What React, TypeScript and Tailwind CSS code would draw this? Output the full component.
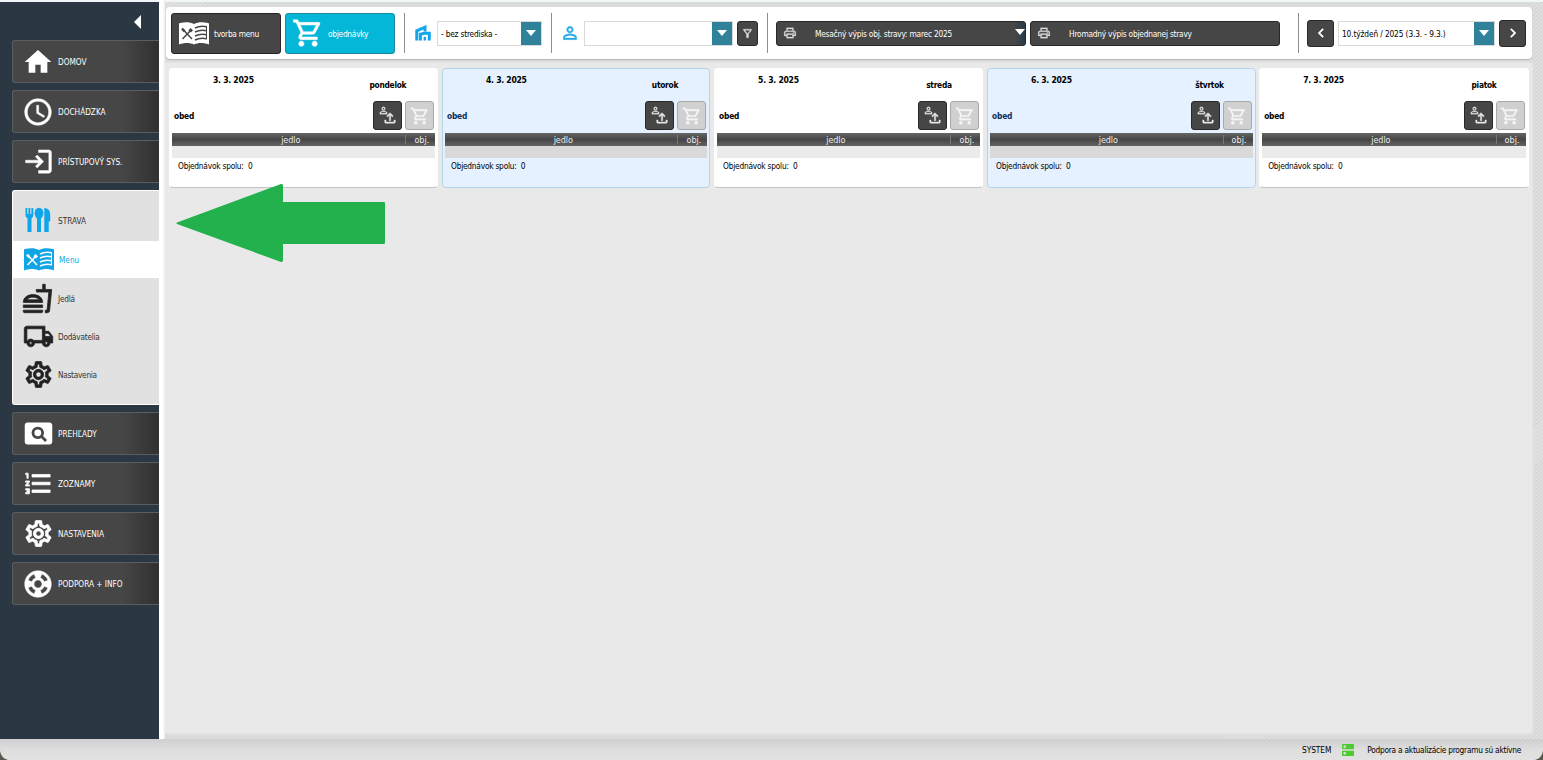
import React from 'react';
import {
  MdAccessTime,
  MdChevronLeft,
  MdChevronRight,
  MdDns,
  MdFormatListNumbered,
  MdHome,
  MdLogin,
  MdOutlineFastfood,
  MdOutlineFileUpload,
  MdOutlineFilterAlt,
  MdOutlineLocalShipping,
  MdOutlinePrint,
  MdOutlineSettings,
  MdOutlineShoppingCart,
  MdPageview,
  MdPersonOutline,
  MdSupport,
} from 'react-icons/md';

const hatch = 'bg-[repeating-linear-gradient(135deg,#d6d6d6_0px,#d6d6d6_1.4px,#e0e0e0_1.4px,#e0e0e0_2.83px)]';

// Heavier outline for the thin Material glyphs; their empty bounding path stays unstroked
const bold = 'shrink-0 stroke-current [stroke-width:0.6] [&>[fill=none]]:stroke-none';
const semi = 'shrink-0 stroke-current [stroke-width:0.35] [&>[fill=none]]:stroke-none';

const MenuBookIcon = ({ lines }: { lines: string }) => (
  <svg width="30" height="23" viewBox="0 0 30 23" className="shrink-0">
    <path d="M0 2Q0 1 1 1C6 -0.3 11 -0.2 15 2C19 -0.2 24 -0.3 29 1Q30 1 30 2V22.5C25 20.5 19 20.5 15 22.5C11 20.5 5 20.5 0 22.5Z" fill="currentColor" />
    <g stroke={lines} fill="none">
      <path d="M3.5 7L13 17M12.5 7.5L3.5 17" strokeWidth="1.5" />
      <path d="M10.6 9.4L12.8 7.2" strokeWidth="3.4" />
      <path d="M3 6.6L5.6 9.4" strokeWidth="2.4" />
      <path d="M16 6C20 4 23.5 4 27.5 4.7M16 10C20 8 23.5 8 27.5 8.7M16 14C20 12 23.5 12 27.5 12.7M16 18C20 16 23.5 16 27.5 16.7" strokeWidth="1.5" />
      <path d="M27.5 4V17.4" strokeWidth="1" />
    </g>
  </svg>
);

const CutleryIcon = () => (
  <svg width="26" height="26" viewBox="0 0 26 26" fill="currentColor" className="shrink-0">
    <path d="M0.5 1H2.3V7H3.4V1H5.3V7H6.4V1H8.3V8Q8.3 10.5 6.5 11.3V25H2.5V11.3Q0.5 10.5 0.5 8Z" />
    <ellipse cx="14" cy="6.3" rx="4.4" ry="5.6" />
    <path d="M12 10H16V25H12ZM19.3 1Q25.2 1.2 25.2 8V14.5H23.7V25H19.3Z" />
  </svg>
);

const CentreIcon = () => (
  <svg width="16" height="17" viewBox="0 0 16 17" fill="none" stroke="#12a5ea" strokeWidth="3" className="shrink-0">
    <path d="M1.8 15.5V5.8L10 2.2V6.5" />
    <path d="M5.4 15.5V9.2L9.5 8.3H14.3V15.5" />
    <path d="M9.8 15.5V11.8" strokeWidth="2.4" />
  </svg>
);

const Caret = () => (
  <svg width="10" height="6" viewBox="0 0 10 6" fill="#fff">
    <path d="M0 0H10L5 6Z" />
  </svg>
);

const SideButton = ({ icon, label }: { icon: React.ReactNode; label: string }) => (
  <div className="mb-[7px] flex h-[43px] w-[147px] items-center rounded-l-[3px] border border-r-0 border-[#5b5e60] bg-linear-to-r from-[#464646] from-75% to-[#303030] pl-[10px] text-white">
    <span className="flex w-[30px] justify-center">{icon}</span>
    <span className="ml-[5px] pt-[2px]">{label}</span>
  </div>
);

const SubItem = ({ icon, label }: { icon: React.ReactNode; label: string }) => (
  <div className="flex h-[38px] items-center pl-[10px] text-[#222]">
    <span className="flex w-[30px] justify-center">{icon}</span>
    <span className="ml-[5px] pt-px tracking-[-0.25px] text-[#333]">{label}</span>
  </div>
);

const Sidebar = () => (
  <div className="mt-[2px] h-[737px] w-[159px] shrink-0 bg-[#2b3843] pl-3 text-[8.2px]">
    <div className="flex h-[38px] items-center justify-end pr-[18px] pt-[2px]">
      <svg width="7" height="14" viewBox="0 0 7 14" fill="#fff">
        <path d="M7 0V14L0 7Z" />
      </svg>
    </div>
    <SideButton icon={<MdHome size={32} className="shrink-0" />} label="DOMOV" />
    <SideButton icon={<MdAccessTime size={32} className={semi} />} label="DOCHÁDZKA" />
    <SideButton icon={<MdLogin size={31} className={semi} />} label="PRÍSTUPOVÝ SYS." />
    <div className="mb-[7px] h-[215px] w-[147px] rounded-l-[3px] border border-r-0 border-white bg-[#e1e1e1]">
      <div className="flex h-[50px] items-center pl-3 pt-[8px] text-[#0ea5e9]">
        <CutleryIcon />
        <span className="ml-[7px] pt-[3px] text-[#333]">STRAVA</span>
      </div>
      <div className="mb-[2px] flex h-[37px] items-center bg-white pl-[11px] text-[#12a5e5]">
        <MenuBookIcon lines="#fff" />
        <span className="ml-[5px] pt-[2px]">Menu</span>
      </div>
      <SubItem icon={<MdOutlineFastfood size={31} className={`-mt-[2px] -ml-px ${bold}`} />} label="Jedlá" />
      <SubItem icon={<MdOutlineLocalShipping size={31} className={`-mt-[2px] ${bold}`} />} label="Dodávatelia" />
      <SubItem icon={<MdOutlineSettings size={31} className={`-mt-[2px] ${bold}`} />} label="Nastavenia" />
    </div>
    <SideButton icon={<MdPageview size={33} className="shrink-0" />} label="PREHĽADY" />
    <SideButton icon={<MdFormatListNumbered size={31} className={bold} />} label="ZOZNAMY" />
    <SideButton icon={<MdOutlineSettings size={31} className={bold} />} label="NASTAVENIA" />
    <SideButton icon={<MdSupport size={32} className={semi} />} label="PODPORA + INFO" />
  </div>
);

const Combo = ({ value, className }: { value: string; className: string }) => (
  <div className={`flex h-[25px] items-stretch border border-[#d9d9d9] bg-white ${className}`}>
    <span className="flex grow items-center whitespace-nowrap pl-[3px] pt-[2px] text-black">{value}</span>
    <span className="flex w-5 shrink-0 items-center justify-center bg-[#30819a]">
      <Caret />
    </span>
  </div>
);

const Divider = ({ className }: { className: string }) => <div className={`h-10 w-px shrink-0 bg-[#8c8c8c] ${className}`} />;

const PrintButton = ({ label, children }: { label: string; children?: React.ReactNode }) => (
  <div className="relative flex h-[25px] w-[250px] items-center rounded-[3px] border border-[#282828] bg-[#464646] pl-[6px] text-white">
    <MdOutlinePrint size={14} className={`text-[#ddd] ${semi}`} />
    <span className="whitespace-nowrap pl-[18px] pt-[2px] tracking-[-0.23px]">{label}</span>
    {children}
  </div>
);

const Toolbar = () => (
  <div className="ml-px flex h-[52px] w-[1366px] items-center rounded-[4px] bg-white pl-[5px] text-[8.3px] shadow-[0_1px_1px_#b5b5b5]">
    <div className="flex h-[41px] w-[110px] items-center rounded-[3px] border border-[#252525] bg-[#464646] pl-[7px] text-white">
      <MenuBookIcon lines="#464646" />
      <span className="ml-[5px] pt-[2px] tracking-[-0.27px]">tvorba menu</span>
    </div>
    <div className="ml-1 flex h-[41px] w-[110px] items-center rounded-[3px] border border-[#168a9c] bg-[#04b6d7] pl-[6px] text-white">
      <MdOutlineShoppingCart size={32} className={semi} />
      <span className="ml-[4px] pt-[2px] tracking-[-0.27px]">objednávky</span>
    </div>
    <Divider className="ml-[9px]" />
    <div className="ml-[10px]"><CentreIcon /></div>
    <Combo value="- bez strediska -" className="ml-[6px] w-[105px] tracking-[-0.2px]" />
    <Divider className="ml-[9px]" />
    <MdPersonOutline size={20} className={`ml-2 mr-1 text-[#24a9e8] ${semi}`} />
    <Combo value="" className="w-[149px]" />
    <div className="ml-1 flex h-[25px] w-[21px] items-center justify-center rounded-[3px] border border-[#282828] bg-[#464646] text-[#ddd]">
      <MdOutlineFilterAlt size={13} className={bold} />
    </div>
    <Divider className="ml-[9px]" />
    <div className="ml-2 flex gap-1">
      <PrintButton label="Mesačný výpis obj. stravy: marec 2025">
        <span className="absolute right-0 top-0 flex h-[23px] w-[10px] items-center bg-linear-to-r from-[#464646] to-[#263b4a] pb-[2px]">
          <Caret />
        </span>
      </PrintButton>
      <PrintButton label="Hromadný výpis objednanej stravy" />
    </div>
    <Divider className="ml-[18px]" />
    <div className="ml-2 flex size-[27px] items-center justify-center rounded-[3px] border border-[#282828] bg-[#464646] text-white">
      <MdChevronLeft size={18} className={bold} />
    </div>
    <Combo value="10.týždeň / 2025 (3.3. - 9.3.)" className="ml-1 w-[157px] tracking-[-0.13px]" />
    <div className="ml-1 flex size-[27px] items-center justify-center rounded-[3px] border border-[#282828] bg-[#464646] text-white">
      <MdChevronRight size={18} className={bold} />
    </div>
  </div>
);

interface Day {
  date: string;
  name: string;
  blue?: boolean;
  nameClass: string;
}

const days: Day[] = [
  { date: '3. 3. 2025', name: 'pondelok', nameClass: 'pr-[5px]' },
  { date: '4. 3. 2025', name: 'utorok', blue: true, nameClass: 'pl-[5px]' },
  { date: '5. 3. 2025', name: 'streda', nameClass: 'pl-[7px]' },
  { date: '6. 3. 2025', name: 'štvrtok', blue: true, nameClass: 'pl-[4px]' },
  { date: '7. 3. 2025', name: 'piatok', nameClass: 'pl-[7px]' },
];

const DayCard = ({ day }: { day: Day }) => (
  <div
    className={`h-[120px] shrink-0 rounded-[4px] border px-[2px] text-[8.3px] text-black ${
      day.blue ? 'w-[268.5px] border-[#b4d4ea] bg-[#e5f1ff]' : 'w-[269.4px] border-white border-b-[#c4c4c4] bg-white'
    }`}
  >
    <div className="flex h-[31px] justify-between pl-[41px] pt-[5px] text-[8.6px] font-bold leading-[12px]">
      <span className="tracking-[-0.28px]">{day.date}</span>
      <span className={`w-[90px] pt-[5px] text-center text-[8.3px] tracking-[-0.25px] ${day.nameClass}`}>{day.name}</span>
    </div>
    <div className="flex h-[31px] items-center pr-px">
      <span className={`grow pl-[2px] pt-px font-bold tracking-[-0.2px] ${day.blue ? 'text-[#0c2f5c]' : ''}`}>obed</span>
      <div className="relative mr-[3px] size-[29px] rounded-[3px] border border-[#282828] bg-[#464646] text-[#e8e8e8]">
        <MdPersonOutline size={11} className={`absolute left-[4px] top-[3px] ${bold}`} />
        <MdOutlineFileUpload size={16} className={`absolute left-[8px] top-[8px] ${bold}`} />
      </div>
      <div className="flex size-[29px] items-center justify-center rounded-[3px] border border-[#a9a9a9] bg-[#d0d0d0] text-[#f4f4f4]">
        <MdOutlineShoppingCart size={20} className={semi} />
      </div>
    </div>
    <div className="mt-[2px] flex h-[13px] items-center bg-linear-to-b from-[#666] via-[#464646] to-[#636363] text-[9px] leading-[13px] text-[#eee]">
      <span className="grow pl-[4px] pt-px text-center tracking-[-0.1px]">jedlo</span>
      <span className="h-[9px] w-px bg-[#777]" />
      <span className="w-[29px] pl-[8px] pt-px">obj.</span>
    </div>
    <div className={`h-3 ${day.blue ? 'bg-[#d9d9d9]' : 'bg-[#ebebeb]'}`} />
    <div className="whitespace-pre pl-[6px] pt-[3px] leading-[11px] tracking-[-0.23px]">Objednávok spolu:  0</div>
  </div>
);

const StatusBar = () => (
  <div className="relative flex h-[21px] items-center justify-end overflow-hidden bg-linear-to-b from-[#cfcfd2] via-[#dedede] to-[#e2e2e2] pr-[22px] text-[8.3px] text-black">
    <span className="pt-[2px] tracking-[-0.1px]">SYSTEM</span>
    <MdDns size={16} className="ml-[9px] mr-[11px] text-[#4ecb32]" />
    <span className="whitespace-nowrap pt-[2px] tracking-[-0.25px]">Podpora a aktualizácie programu sú aktívne</span>
    <svg width="8" height="9" className="absolute bottom-0 left-0" fill="#5c574d">
      <path d="M0 0Q1 7 8 9H0Z" />
    </svg>
    <svg width="8" height="9" className="absolute bottom-0 right-0" fill="#5c574d">
      <path d="M8 0Q7 7 0 9H8Z" />
    </svg>
  </div>
);

const App: React.FC = () => {
  return (
    <div className="relative h-[760px] w-[1543px] overflow-hidden bg-[#f1f6f9] font-['DejaVu_Sans_Condensed','DejaVu_Sans',sans-serif] [font-stretch:condensed]">
      <div className="flex h-[739px]">
        <Sidebar />
        <div className="w-[6px] shrink-0 bg-linear-to-r from-white from-60% to-[#eee]" />
        <div className={`mt-[2px] flex grow flex-col pt-[5px] ${hatch}`}>
          <Toolbar />
          <div className="mt-1 h-[670px] w-[1367px] bg-[#e9e9e9] pl-1 pt-[5px] shadow-[0_0_3px_#eee]">
            <div className="flex gap-[3.6px]">
              {days.map((day) => (
                <DayCard key={day.date} day={day} />
              ))}
            </div>
          </div>
        </div>
      </div>
      <StatusBar />

      {/* Pointer to the active section */}
      <svg width="210" height="80" viewBox="0 0 210 80" className="absolute left-[176px] top-[183px]" fill="#23b14d">
        <path d="M1 39.5Q0 40 1 41L105 79Q107 79.500 107 77V61H208Q209 61 209 60V20Q209 19 208 19H107V3Q107 0.500 105 1Z" />
      </svg>
    </div>
  );
};

export default App;
